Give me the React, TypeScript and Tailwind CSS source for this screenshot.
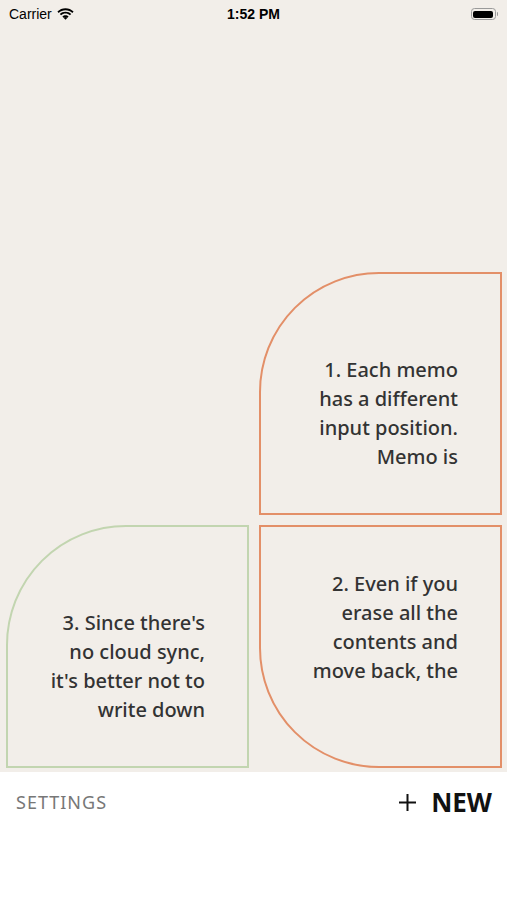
import React from "react";

const font = { fontFamily: '"Noto Sans", "Open Sans", sans-serif' };

function StatusBar() {
  return (
    <div className="relative flex h-[28px] items-center justify-between px-[9px] text-black" style={{ fontFamily: '"Liberation Sans", Arial, sans-serif' }}>
      <div className="flex items-center gap-[5px] text-[14px]">
        <span>Carrier</span>
        <svg width="17" height="12" viewBox="0 0 17 12">
          <path d="M8.5 2.2c2.6 0 5 1 6.8 2.7l1.3-1.3C14.4 1.5 11.6.3 8.5.3S2.6 1.5.4 3.6l1.3 1.3C3.5 3.2 5.9 2.2 8.5 2.2z" fill="black" />
          <path d="M8.5 5.6c1.7 0 3.2.6 4.4 1.7l1.3-1.3c-1.5-1.4-3.5-2.3-5.7-2.3S4.3 4.6 2.8 6l1.3 1.3c1.2-1.1 2.7-1.7 4.4-1.7z" fill="black" />
          <path d="M8.5 9c.8 0 1.5.3 2 .8L8.5 11.8 6.5 9.8c.5-.5 1.2-.8 2-.8z" fill="black" />
          <path d="M8.5 7.3c1.2 0 2.3.5 3.1 1.2l-1.1 1.3c-.5-.5-1.2-.8-2-.8s-1.5.3-2 .8L5.4 8.5c.8-.7 1.900-1.2 3.1-1.2z" fill="black" />
        </svg>
      </div>
      <span className="absolute left-1/2 -translate-x-1/2 text-[14px] font-bold">1:52 PM</span>
      <div className="flex items-center">
        <div className="flex h-[12px] w-[25px] items-center rounded-[3.5px] border border-[#9a9a9a] p-[1.5px]">
          <div className="h-full w-full rounded-[2px] bg-black" />
        </div>
        <div className="ml-[1px] h-[4px] w-[1.5px] rounded-r-sm bg-[#9a9a9a]" />
      </div>
    </div>
  );
}

export default function App() {
  return (
    <div className="flex h-[900px] w-[507px] flex-col bg-[#f2eee9]" style={font}>
      <StatusBar />
      <div className="flex flex-1 flex-col justify-end pb-[4px] pl-[6px] pr-[5px]">
        <div className="grid grid-cols-[243px_243px] grid-rows-[243px_243px] gap-[10px]">
          <div />
          {/* memo 1 */}
          <div className="flex flex-col justify-center rounded-tl-[120px] border-2 border-[#e38f68] pb-[44px] pl-[40px] pr-[42px] pt-[83px] text-right text-[20px] font-medium leading-[29px] text-[#333]">
            <p>1. Each memo has a different input position. Memo is</p>
          </div>
          {/* memo 3 */}
          <div className="flex flex-col justify-center rounded-tl-[120px] border-2 border-[#c2d5b0] pb-[44px] pl-[40px] pr-[42px] pt-[83px] text-right text-[20px] font-medium leading-[29px] text-[#333]">
            <p>3. Since there's no cloud sync, it's better not to write down</p>
          </div>
          {/* memo 2 */}
          <div className="flex flex-col justify-center rounded-bl-[120px] border-2 border-[#e38f68] pb-[83px] pl-[40px] pr-[42px] pt-[44px] text-right text-[20px] font-medium leading-[29px] text-[#333]">
            <p>2. Even if you erase all the contents and move back, the</p>
          </div>
        </div>
      </div>
      <div className="flex h-[128px] items-start justify-between bg-white pl-[16px] pr-[15px] pt-[16px]">
        <span className="text-[18px] leading-[28px] tracking-[1px] text-[#777]">SETTINGS</span>
        <div className="flex items-center gap-[15px] text-[26px] leading-[28px] text-[#111]">
          <svg width="17" height="17" viewBox="0 0 17 17" className="mt-[1px]">
            <path d="M8.5 0v17M0 8.5h17" stroke="#111" strokeWidth="2" />
          </svg>
          <span className="font-bold">NEW</span>
        </div>
      </div>
    </div>
  );
}
